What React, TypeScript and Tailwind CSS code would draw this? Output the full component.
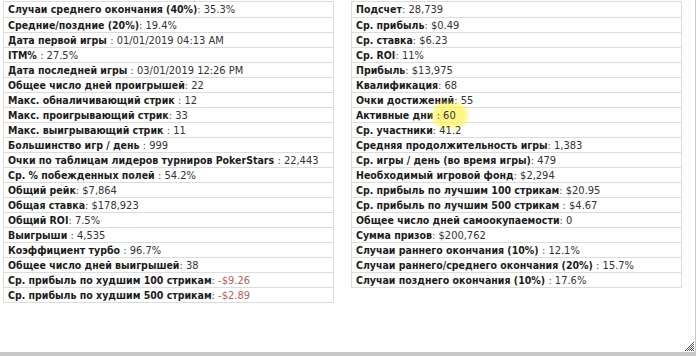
type Stat = { label: string; value: string; neg?: boolean; mark?: boolean };

const LEFT: Stat[] = [
  { label: "Случаи среднего окончания (40%)", value: "35.3%" },
  { label: "Средние/поздние (20%)", value: "19.4%" },
  { label: "Дата первой игры ", value: "01/01/2019 04:13 AM" },
  { label: "ITM% ", value: "27.5%" },
  { label: "Дата последней игры ", value: "03/01/2019 12:26 PM" },
  { label: "Общее число дней проигрышей", value: "22" },
  { label: "Макс. обналичивающий стрик ", value: "12" },
  { label: "Макс. проигрывающий стрик", value: "33" },
  { label: "Макс. выигрывающий стрик ", value: "11" },
  { label: "Большинство игр / день ", value: "999" },
  { label: "Очки по таблицам лидеров турниров PokerStars ", value: "22,443" },
  { label: "Ср. % побежденных полей ", value: "54.2%" },
  { label: "Общий рейк", value: "$7,864" },
  { label: "Общая ставка", value: "$178,923" },
  { label: "Общий ROI", value: "7.5%" },
  { label: "Выигрыши ", value: "4,535" },
  { label: "Коэффициент турбо ", value: "96.7%" },
  { label: "Общее число дней выигрышей", value: "38" },
  { label: "Ср. прибыль по худшим 100 стрикам", value: "-$9.26", neg: true },
  { label: "Ср. прибыль по худшим 500 стрикам", value: "-$2.89", neg: true },
];

const RIGHT: Stat[] = [
  { label: "Подсчет", value: "28,739" },
  { label: "Ср. прибыль", value: "$0.49" },
  { label: "Ср. ставка", value: "$6.23" },
  { label: "Ср. ROI", value: "11%" },
  { label: "Прибыль", value: "$13,975" },
  { label: "Квалификация", value: "68" },
  { label: "Очки достижений", value: "55" },
  { label: "Активные дни ", value: "60", mark: true },
  { label: "Ср. участники", value: "41.2" },
  { label: "Средняя продолжительность игры", value: "1,383" },
  { label: "Ср. игры / день (во время игры)", value: "479" },
  { label: "Необходимый игровой фонд", value: "$2,294" },
  { label: "Ср. прибыль по лучшим 100 стрикам", value: "$20.95" },
  { label: "Ср. прибыль по лучшим 500 стрикам ", value: "$4.67" },
  { label: "Общее число дней самоокупаемости", value: "0" },
  { label: "Сумма призов", value: "$200,762" },
  { label: "Случаи раннего окончания (10%) ", value: "12.1%" },
  { label: "Случаи раннего/среднего окончания (20%) ", value: "15.7%" },
  { label: "Случаи позднего окончания (10%) ", value: "17.6%" },
];

function StatTable({ rows }: { rows: Stat[] }) {
  return (
    <div className="w-[331px] border border-[#dcdcdc]">
      {rows.map((r, i) => (
        <div
          key={r.label}
          className={`h-[15px] whitespace-pre px-[4px] leading-[15px] ${i > 0 ? "border-t border-[#dcdcdc]" : ""}`}
        >
          <span className="text-[10.5px] font-bold text-[#1c1c1c]">{r.label}</span>
          <span className="relative">
            {/* маркер-выделение */}
            {r.mark && (
              <span className="pointer-events-none absolute left-[-5px] top-[-6px] h-[25px] w-[36px] rounded-full bg-[#fff35a]/75 blur-[2px]" />
            )}
            <span className="relative text-[#555]">: </span>
            <span className={`relative ${r.neg ? "text-[#c0605c]" : "text-[#333]"}`}>{r.value}</span>
          </span>
        </div>
      ))}
    </div>
  );
}

export default function App() {
  return (
    <div className="h-[356px] w-[696px] overflow-hidden bg-white font-['DejaVu_Sans_Condensed','DejaVu_Sans',Verdana,sans-serif] text-[11px]">
      <div className="relative flex h-full w-full items-start gap-[17px] border-r border-b-4 border-[#c8c8c8] pl-[3px] pt-[1px]">
        <StatTable rows={LEFT} />
        <StatTable rows={RIGHT} />
        <svg className="absolute right-[1px] bottom-[1px]" width="9" height="9" viewBox="0 0 9 9">
          {[...Array(9)].map((_, y) =>
            [...Array(9)].map((_, x) =>
              x + y >= 8 && (x + y) % 2 === 0 ? (
                <rect key={`${x}-${y}`} x={x} y={y} width="1" height="1" fill="#555" />
              ) : null
            )
          )}
        </svg>
      </div>
    </div>
  );
}
